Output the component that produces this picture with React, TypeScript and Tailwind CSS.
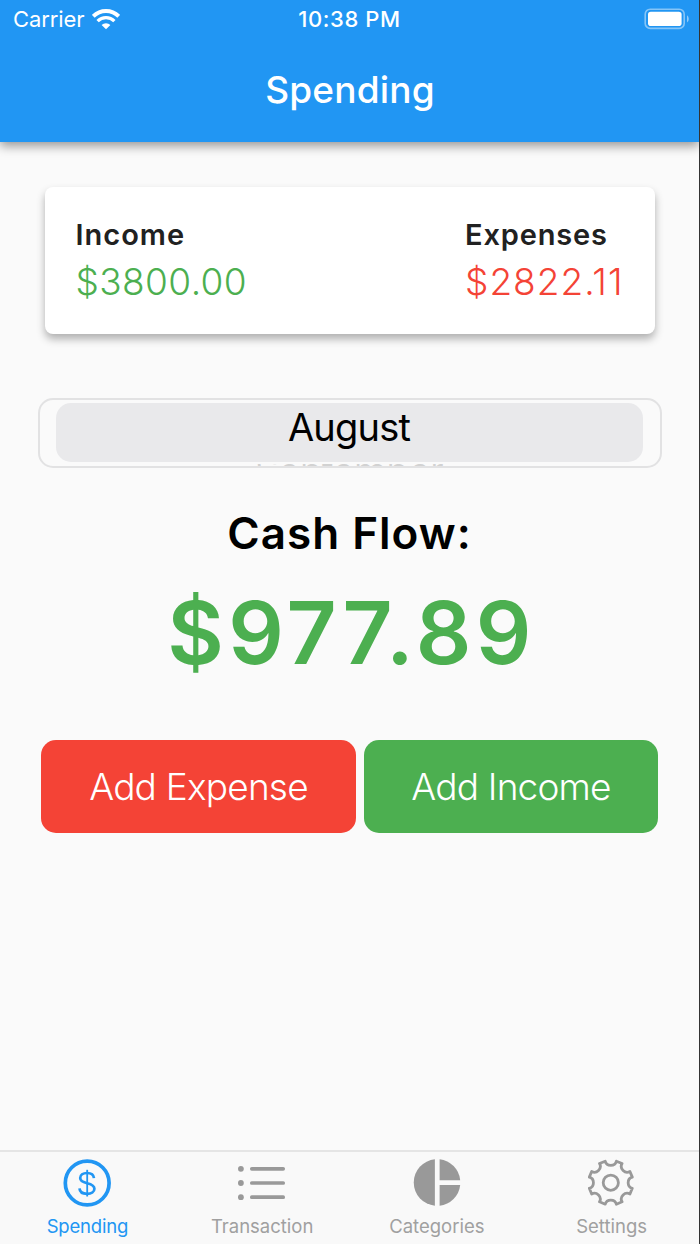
import React from "react";

const C = 24;
const pt = (r: number, deg: number) => {
  const a = ((deg - 90) * Math.PI) / 180;
  return `${(C + r * Math.cos(a)).toFixed(2)} ${(C + r * Math.sin(a)).toFixed(2)}`;
};
const gearPath =
  Array.from({ length: 8 }, (_, k) => {
    const a = k * 45;
    return `${k === 0 ? "M" : "L"}${pt(22.2, a - 14.5)} A5.7 5.3 ${a} 0 0 ${pt(22.2, a + 14.5)}`;
  }).join(" ") + "Z";

function WifiIcon() {
  return (
    <svg className="h-[21px] w-[28px]" viewBox="0 0 28 21" fill="none" stroke="white">
      <path d="M1.3 7.3A18 18 0 0 1 26.7 7.3" strokeWidth="3.9" />
      <path d="M5.6 12.1A11.9 11.9 0 0 1 22.4 12.1" strokeWidth="3.3" />
      <path d="M14 20.2L9.6 16A6.2 6.2 0 0 1 18.4 16Z" fill="white" stroke="none" />
    </svg>
  );
}

function BatteryIcon() {
  return (
    <svg className="mb-[2px] h-[22px] w-[46px]" viewBox="0 0 46 22">
      <rect x="1.2" y="1.2" width="39" height="19.2" rx="5" fill="none" stroke="white" strokeOpacity="0.45" strokeWidth="1.6" />
      <rect x="4" y="3.8" width="33.6" height="14.2" rx="2.8" fill="white" />
      <path d="M43 7.2Q44.8 8.4 44.8 11T43 14.4Z" fill="white" fillOpacity="0.5" />
    </svg>
  );
}

function DollarIcon() {
  return (
    <svg className="size-12 shrink-0" viewBox="0 0 48 48" fill="none" stroke="#2196f3">
      <circle cx="24.2" cy="24" r="21.9" strokeWidth="3.7" />
      <path d="M31 19.2C30.7 16 28 14 24 14C20 14 17.2 16.1 17.2 19.1C17.2 21.9 19.2 23.1 24 24.2C29 25.3 31.4 26.7 31.4 29.7C31.4 32.8 28.5 34.8 24 34.8C19.6 34.8 16.7 32.7 16.5 29.4" strokeWidth="2.7" />
      <path d="M24.2 10.8V37.5" strokeWidth="1.8" />
    </svg>
  );
}

function ListIcon() {
  return (
    <svg className="size-12 shrink-0" viewBox="0 0 48 48" stroke="#999" strokeWidth="3.7" strokeLinecap="round" fill="#999">
      <path d="M13.8 9.8H45.2M13.8 24H45.2M13.8 38.2H45.2" />
      <g stroke="none">
        <circle cx="2.9" cy="9.8" r="2.9" />
        <circle cx="2.9" cy="24" r="2.9" />
        <circle cx="2.9" cy="38.2" r="2.9" />
      </g>
    </svg>
  );
}

function PieIcon() {
  return (
    <svg className="size-12 shrink-0" viewBox="0 0 48 48" fill="#999">
      <path d="M21.9 .3A23.3 23.3 0 0 0 21.9 46.7Z" />
      <path d="M26.6 .3A23.3 23.3 0 0 1 47.2 21.2H26.6Z" />
      <path d="M26.6 46.7A23.3 23.3 0 0 0 47.2 26H26.6Z" />
    </svg>
  );
}

function GearIcon() {
  return (
    <svg className="size-12 shrink-0" viewBox="1.2 0.3 48 48" fill="none" stroke="#999" strokeWidth="2.8" strokeLinejoin="round">
      <path d={gearPath} />
      <circle cx="24" cy="24" r="7.6" />
    </svg>
  );
}

function Tab({ icon, children, active }: { icon: React.ReactNode; children: React.ReactNode; active?: boolean }) {
  return (
    <div className={`flex w-1/4 flex-col items-center pt-[7px] text-[18.5px] leading-[39px] ${active ? "tracking-[-0.2px] text-[#2196f3]" : "tracking-[0px] text-[#a0a0a0]"}`}>
      {icon}
      <span>{children}</span>
    </div>
  );
}

export default function App() {
  return (
    <div className="flex h-[1244px] w-[700px] flex-col overflow-hidden whitespace-nowrap border-r border-[#333] bg-[#fafafa] font-['Inter',sans-serif]">
      <header className="h-[142px] shrink-0 bg-[#2196f3] text-white shadow-[0_4px_10px_rgba(0,0,0,0.4)]">
        <div className="grid h-[39px] grid-cols-3 items-center pr-[9px] pl-[13px] text-[22px]">
          <div className="flex items-center gap-2">
            <span className="tracking-[-0.1px]">Carrier</span>
            <WifiIcon />
          </div>
          <span className="pr-[4px] text-center font-medium tracking-[0.6px]">10:38 PM</span>
          <div className="flex justify-end"><BatteryIcon /></div>
        </div>
        <h1 className="pl-px text-center text-[37px] leading-[102px] font-medium tracking-[0.2px]">Spending</h1>
      </header>

      <main className="flex flex-1 flex-col items-center">
        <section className="mt-[45px] flex h-[147px] w-[610px] justify-between rounded-[8px] bg-white px-[31px] pt-[27px] shadow-[0_5px_9px_rgba(0,0,0,0.3)]">
          <div>
            <div className="text-[29px] leading-[41px] font-semibold tracking-[1px] text-[#212121]">Income</div>
            <div className="text-[37px] leading-[53px] font-light tracking-[0.4px] text-[#4caf50]">$3800.00</div>
          </div>
          <div>
            <div className="text-[29px] leading-[41px] font-semibold tracking-[0.85px] text-[#212121]">Expenses</div>
            <div className="text-[37px] leading-[53px] font-light tracking-[1px] text-[#f44336]">$2822.11</div>
          </div>
        </section>

        <section className="mt-[64px] h-[70px] w-[624px] overflow-hidden rounded-[15px] border-2 border-[#e2e2e3] pt-[3px] pr-[17px] pl-[16px]">
          <div className="h-[59px] rounded-[15px] bg-[#e9e9eb] text-center text-[38px] leading-[48px] font-normal tracking-[-0.8px] text-black">August</div>
          <div className="mt-[2px] h-[2px] overflow-hidden text-[38px] leading-[38px] text-[#d2d2d2]">
            <div className="-mt-[12px] text-center font-light tracking-[-0.6px]">September</div>
          </div>
        </section>

        <h2 className="mt-[35px] text-[44px] leading-[60px] font-semibold tracking-[1px] text-black">Cash Flow:</h2>
        <div className="mt-[20px] pl-[4px] text-[87px] leading-[100px] font-semibold tracking-[4.3px] text-[#4caf50]">$977.89</div>

        <div className="mt-[57px] flex h-[93px] gap-[8px] text-[37px] text-white">
          <button className="w-[315px] rounded-[15px] bg-[#f44336] font-light tracking-[-0.8px]">Add Expense</button>
          <button className="w-[294px] rounded-[15px] bg-[#4caf50] font-light tracking-[-0.8px]">Add Income</button>
        </div>
      </main>

      <nav className="flex h-[94px] shrink-0 border-t-2 border-[#e5e5e5] bg-[#f9f9f9]">
        <Tab active icon={<DollarIcon />}>Spending</Tab>
        <Tab icon={<ListIcon />}>Transaction</Tab>
        <Tab icon={<PieIcon />}>Categories</Tab>
        <Tab icon={<GearIcon />}>Settings</Tab>
      </nav>
    </div>
  );
}
